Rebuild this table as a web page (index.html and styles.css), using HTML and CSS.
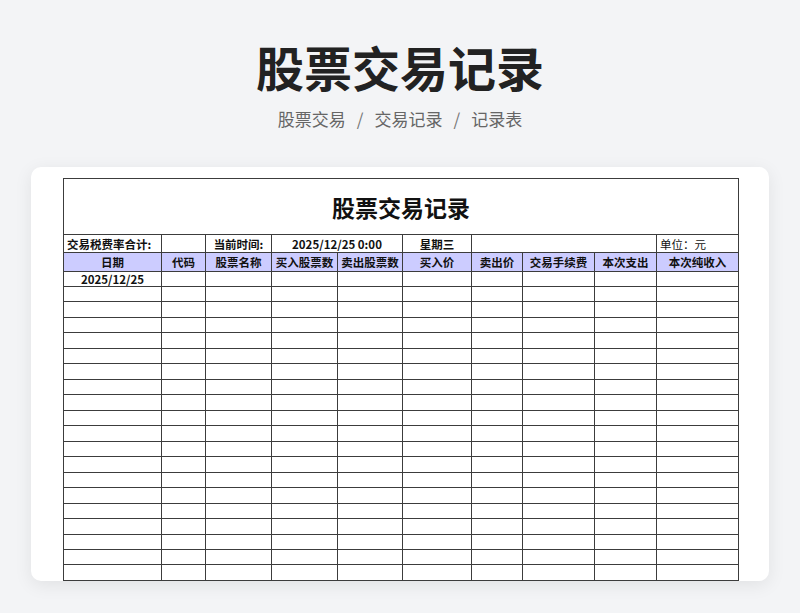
FILE: index.html
```html
<!DOCTYPE html>
<html lang="zh-CN">
<head>
<meta charset="utf-8">
<title>股票交易记录</title>
<link rel="stylesheet" href="styles.css">
</head>
<body>
<header class="page-head">
  <h1 class="page-title">股票交易记录</h1>
  <nav class="crumbs"><span>股票交易</span><span class="sep">/</span><span>交易记录</span><span class="sep">/</span><span>记录表</span></nav>
</header>
<main class="card">
  <table class="sheet">
    <colgroup>
      <col class="c1"><col class="c2"><col class="c3"><col class="c4"><col class="c5"><col class="c6"><col class="c7"><col class="c8"><col class="c9"><col class="c10">
    </colgroup>
    <tbody>
      <tr class="r-title"><td colspan="10" class="sheet-title">股票交易记录</td></tr>
      <tr class="r-info">
        <td class="left">交易税费率合计:</td>
        <td></td>
        <td>当前时间:</td>
        <td colspan="2">2025/12/25 0:00</td>
        <td>星期三</td>
        <td colspan="3"></td>
        <td class="left normal">单位：元</td>
      </tr>
      <tr class="r-head">
        <td>日期</td><td>代码</td><td>股票名称</td><td>买入股票数</td><td>卖出股票数</td><td>买入价</td><td>卖出价</td><td>交易手续费</td><td>本次支出</td><td>本次纯收入</td>
      </tr>
      <tr class="r-first"><td>2025/12/25</td><td></td><td></td><td></td><td></td><td></td><td></td><td></td><td></td><td></td></tr>
      <tr class="r-data"><td></td><td></td><td></td><td></td><td></td><td></td><td></td><td></td><td></td><td></td></tr>
      <tr class="r-data"><td></td><td></td><td></td><td></td><td></td><td></td><td></td><td></td><td></td><td></td></tr>
      <tr class="r-data"><td></td><td></td><td></td><td></td><td></td><td></td><td></td><td></td><td></td><td></td></tr>
      <tr class="r-data"><td></td><td></td><td></td><td></td><td></td><td></td><td></td><td></td><td></td><td></td></tr>
      <tr class="r-data"><td></td><td></td><td></td><td></td><td></td><td></td><td></td><td></td><td></td><td></td></tr>
      <tr class="r-data"><td></td><td></td><td></td><td></td><td></td><td></td><td></td><td></td><td></td><td></td></tr>
      <tr class="r-data"><td></td><td></td><td></td><td></td><td></td><td></td><td></td><td></td><td></td><td></td></tr>
      <tr class="r-data"><td></td><td></td><td></td><td></td><td></td><td></td><td></td><td></td><td></td><td></td></tr>
      <tr class="r-data"><td></td><td></td><td></td><td></td><td></td><td></td><td></td><td></td><td></td><td></td></tr>
      <tr class="r-data"><td></td><td></td><td></td><td></td><td></td><td></td><td></td><td></td><td></td><td></td></tr>
      <tr class="r-data"><td></td><td></td><td></td><td></td><td></td><td></td><td></td><td></td><td></td><td></td></tr>
      <tr class="r-data"><td></td><td></td><td></td><td></td><td></td><td></td><td></td><td></td><td></td><td></td></tr>
      <tr class="r-data"><td></td><td></td><td></td><td></td><td></td><td></td><td></td><td></td><td></td><td></td></tr>
      <tr class="r-data"><td></td><td></td><td></td><td></td><td></td><td></td><td></td><td></td><td></td><td></td></tr>
      <tr class="r-data"><td></td><td></td><td></td><td></td><td></td><td></td><td></td><td></td><td></td><td></td></tr>
      <tr class="r-data"><td></td><td></td><td></td><td></td><td></td><td></td><td></td><td></td><td></td><td></td></tr>
      <tr class="r-data"><td></td><td></td><td></td><td></td><td></td><td></td><td></td><td></td><td></td><td></td></tr>
      <tr class="r-data"><td></td><td></td><td></td><td></td><td></td><td></td><td></td><td></td><td></td><td></td></tr>
      <tr class="r-data"><td></td><td></td><td></td><td></td><td></td><td></td><td></td><td></td><td></td><td></td></tr>
    </tbody>
  </table>
</main>
</body>
</html>
```

FILE: styles.css
```css
* { box-sizing: border-box; }
html, body { margin: 0; padding: 0; }
body {
  background: #f3f4f6;
  font-family: "Noto Sans CJK SC", "Noto Sans", sans-serif;
  color: #222;
  width: 800px;
  height: 613px;
  overflow: hidden;
}
.page-head {
  display: flex;
  flex-direction: column;
  align-items: center;
  padding-top: 36px;
}
.page-title {
  margin: 0;
  font-size: 48px;
  line-height: 60px;
  font-weight: 700;
  color: #222;
}
.crumbs {
  margin-top: 11px;
  font-size: 17px;
  line-height: 24px;
  color: #666;
  display: flex;
  gap: 10px;
}
.crumbs .sep { color: #777; padding: 0 1px; }
.card {
  margin: 36px 31px 0 31px;
  background: #fff;
  border-radius: 10px;
  box-shadow: 0 4px 18px rgba(0,0,0,0.08);
  padding: 11px 31px 0 32px;
  height: 414px;
  overflow: hidden;
}
.sheet {
  border-collapse: collapse;
  table-layout: fixed;
  width: 676px;
  font-size: 11.5px;
  font-weight: 700;
  color: #111;
}
.sheet td {
  border: 1px solid #3c3c3c;
  padding: 0 3px;
  text-align: center;
  white-space: nowrap;
  overflow: hidden;
  line-height: 14px;
}
.c1 { width: 98px; }
.c2 { width: 44px; }
.c3 { width: 66px; }
.c4 { width: 66px; }
.c5 { width: 65px; }
.c6 { width: 69px; }
.c7 { width: 51px; }
.c8 { width: 72px; }
.c9 { width: 62px; }
.c10 { width: 82px; }
.r-title { height: 56px; }
.sheet-title { font-size: 23px; font-weight: 700; padding-bottom: 5px; }
.r-info { height: 18px; }
.r-head { height: 19px; }
.r-head td { background: #ccccff; }
.r-first { height: 15px; }
.r-data { height: 15.47px; }
.sheet td.left { text-align: left; }
.sheet td.normal { font-weight: 400; }
```
